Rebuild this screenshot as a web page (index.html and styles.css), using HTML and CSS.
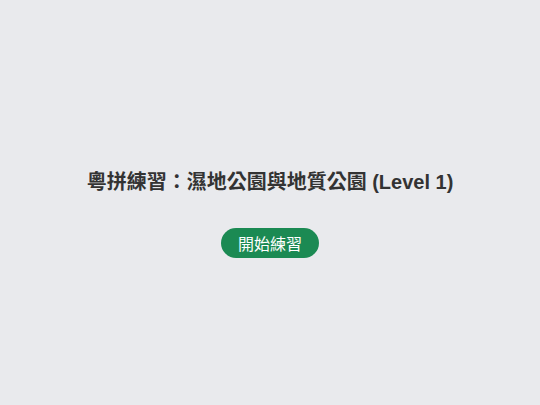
FILE: index.html
```html
<!DOCTYPE html>
<html lang="zh-Hant">
<head>
<meta charset="utf-8">
<link rel="stylesheet" href="styles.css">
</head>
<body>
<main class="screen">
  <h1 class="title">粵拼練習：濕地公園與地質公園 (Level 1)</h1>
  <button class="start">開始練習</button>
</main>
</body>
</html>
```
FILE: styles.css
```css
html, body {
  margin: 0;
  padding: 0;
  height: 100%;
}
body {
  background: #e9eaed;
  font-family: "Liberation Sans", Arial, "Noto Sans CJK TC", sans-serif;
}
.screen {
  box-sizing: border-box;
  height: 100%;
  padding-top: 19px;
  display: flex;
  flex-direction: column;
  align-items: center;
  justify-content: center;
}
.title {
  margin: 0 0 31px;
  font-size: 20px;
  font-weight: bold;
  color: #333;
  line-height: 30px;
}
.start {
  font-family: inherit;
  font-size: 16px;
  color: #fff;
  background: #1b8a53;
  border: none;
  border-radius: 16px;
  width: 98px;
  height: 30px;
  padding: 0;
}
```
